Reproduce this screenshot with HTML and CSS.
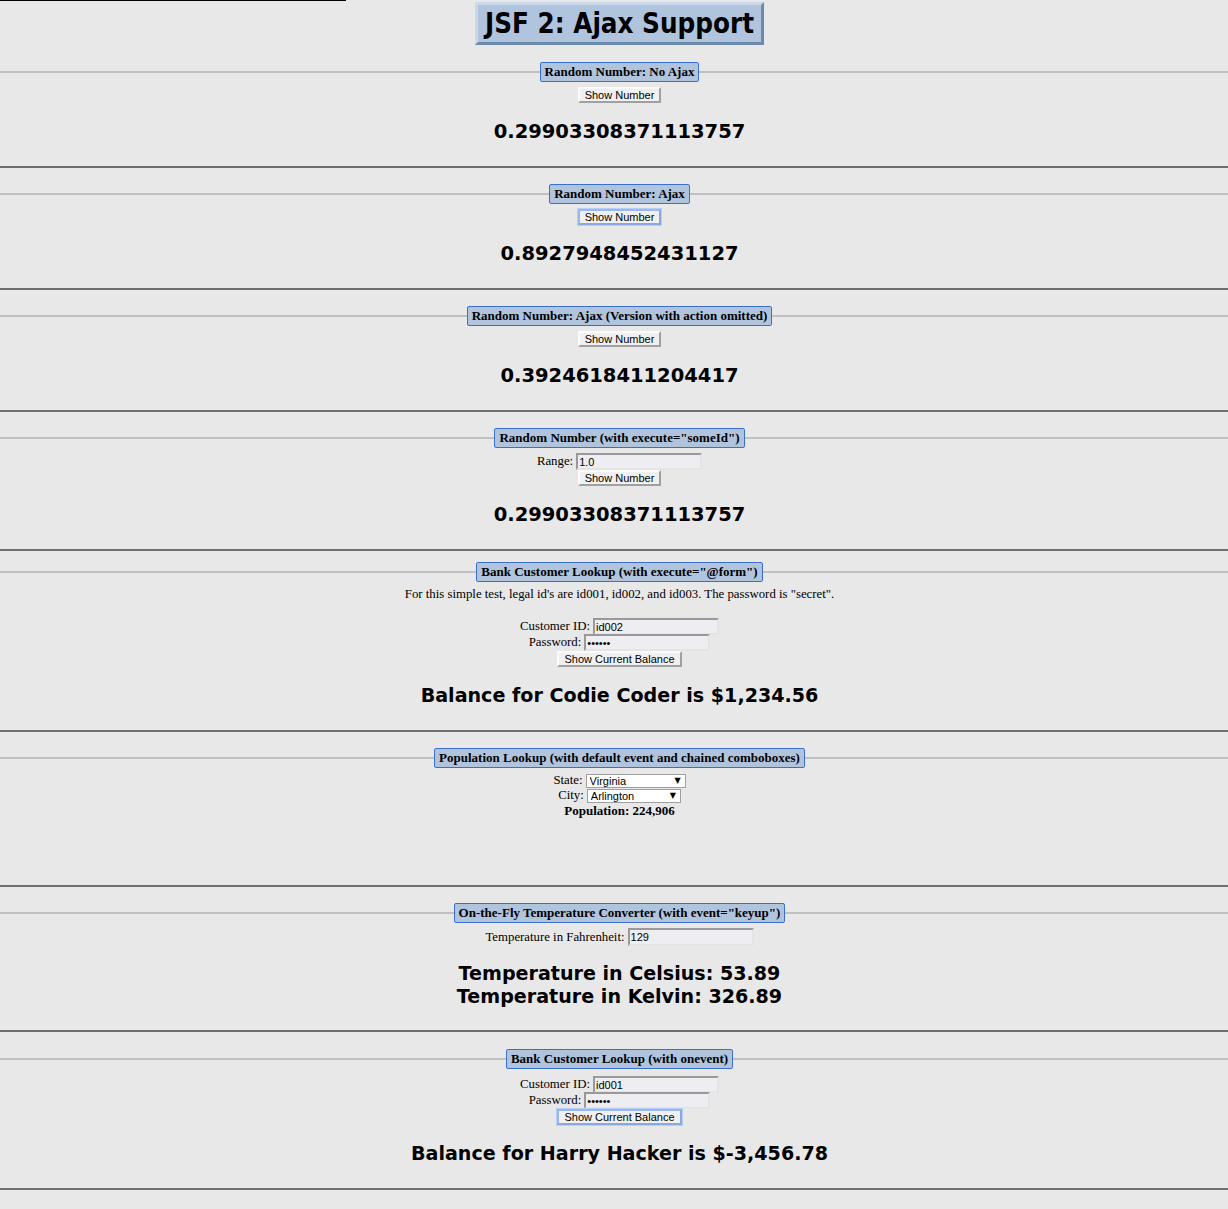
FILE: index.html
```html
<!DOCTYPE html>
<html lang="en">
<head>
<meta charset="utf-8">
<title>JSF 2: Ajax Support</title>
<link rel="stylesheet" href="styles.css">
</head>
<body>
<div class="topline"></div>
<main class="page">
  <div class="title-row"><h1 class="title">JSF 2: Ajax Support</h1></div>

  <section class="panel panel-first">
    <div class="legend-row"><span class="legend">Random Number: No Ajax</span></div>
    <div class="row row-btn"><button class="btn">Show Number</button></div>
    <p class="result">0.29903308371113757</p>
  </section>
  <hr class="sep">

  <section class="panel">
    <div class="legend-row"><span class="legend">Random Number: Ajax</span></div>
    <div class="row row-btn"><button class="btn btn-focus">Show Number</button></div>
    <p class="result">0.8927948452431127</p>
  </section>
  <hr class="sep">

  <section class="panel">
    <div class="legend-row"><span class="legend">Random Number: Ajax (Version with action omitted)</span></div>
    <div class="row row-btn"><button class="btn">Show Number</button></div>
    <p class="result">0.3924618411204417</p>
  </section>
  <hr class="sep">

  <section class="panel">
    <div class="legend-row"><span class="legend">Random Number (with execute="someId")</span></div>
    <div class="row row-field"><label class="lbl">Range:</label><input class="field" type="text" value="1.0"></div>
    <div class="row"><button class="btn">Show Number</button></div>
    <p class="result">0.29903308371113757</p>
  </section>
  <hr class="sep sep-tight">

  <section class="panel">
    <div class="legend-row"><span class="legend">Bank Customer Lookup (with execute="@form")</span></div>
    <p class="note">For this simple test, legal id's are id001, id002, and id003. The password is "secret".</p>
    <div class="row row-field"><label class="lbl">Customer ID:</label><input class="field" type="text" value="id002"></div>
    <div class="row row-field"><label class="lbl">Password:</label><input class="field" type="password" value="secret"></div>
    <div class="row"><button class="btn">Show Current Balance</button></div>
    <p class="result result-text">Balance for Codie Coder is $1,234.56</p>
  </section>
  <hr class="sep">

  <section class="panel">
    <div class="legend-row"><span class="legend">Population Lookup (with default event and chained comboboxes)</span></div>
    <div class="row row-select"><label class="lbl">State:</label><span class="select select-state"><select><option>Virginia</option></select></span></div>
    <div class="row row-select"><label class="lbl">City:</label><span class="select select-city"><select><option>Arlington</option></select></span></div>
    <p class="population">Population: 224,906</p>
  </section>
  <hr class="sep">

  <section class="panel">
    <div class="legend-row"><span class="legend">On-the-Fly Temperature Converter (with event="keyup")</span></div>
    <div class="row row-field row-temp"><label class="lbl">Temperature in Fahrenheit:</label><input class="field" type="text" value="129"></div>
    <div class="temps">
      <p class="result result-text result-line">Temperature in Celsius: 53.89</p>
      <p class="result result-text result-line">Temperature in Kelvin: 326.89</p>
    </div>
  </section>
  <hr class="sep sep-loose">

  <section class="panel panel-last">
    <div class="legend-row"><span class="legend">Bank Customer Lookup (with onevent)</span></div>
    <div class="row row-field"><label class="lbl">Customer ID:</label><input class="field" type="text" value="id001"></div>
    <div class="row row-field"><label class="lbl">Password:</label><input class="field" type="password" value="secret"></div>
    <div class="row"><button class="btn btn-focus">Show Current Balance</button></div>
    <p class="result result-text">Balance for Harry Hacker is $-3,456.78</p>
  </section>
  <hr class="sep">
</main>
</body>
</html>
```

FILE: styles.css
```css
html, body {
  margin: 0;
  padding: 0;
  background: #e8e8e8;
  color: #000;
  font-family: "Liberation Serif", "Times New Roman", serif;
  font-size: 12.8px;
}

.topline {
  width: 346px;
  height: 1px;
  background: #000;
}

.page {
  padding-left: 11px;
}

.title-row {
  display: flex;
  justify-content: center;
  margin-top: 1px;
}

.title {
  margin: 0;
  height: 43px;
  box-sizing: border-box;
  padding: 0 7px;
  background: #b0c4de;
  border: 3px solid;
  border-color: #c9d8ea #6c8bab #6c8bab #c9d8ea;
  font-family: "DejaVu Sans Condensed", "DejaVu Sans", sans-serif;
  font-weight: bold;
  font-size: 27.5px;
  line-height: 37px;
  color: #000;
}

.panel {
  margin: 0;
  text-align: center;
}

.panel-first {
  margin-top: 17px;
}

.legend-row {
  margin-left: -11px;
  padding-left: 11px;
  display: flex;
  justify-content: center;
  background: linear-gradient(#c0c0c0, #c0c0c0) 0 50% / 100% 2px no-repeat;
}

.legend {
  display: inline-block;
  height: 20px;
  box-sizing: border-box;
  padding: 0 4px;
  background: #b0c4de;
  border: 1px solid #3a6fd0;
  border-radius: 2px;
  font-weight: bold;
  font-size: 13px;
  line-height: 18px;
}

.row {
  display: flex;
  justify-content: center;
  align-items: center;
}

.row-btn {
  margin-top: 5px;
}

.row-field {
  height: 17px;
}

.row-field + .row-field {
  margin-top: -1px;
}

.legend-row + .row-field {
  margin-top: 5px;
}

.panel-last .legend-row + .row-field {
  margin-top: 7px;
}

.lbl {
  margin-right: 3px;
}

.field {
  width: 126px;
  height: 17px;
  box-sizing: border-box;
  margin: 0;
  padding: 0 1px;
  background: #eeeef2;
  border: 2px solid;
  border-color: #999 #e4e4e4 #e4e4e4 #999;
  font-family: "Liberation Sans", Arial, sans-serif;
  font-size: 11px;
  color: #000;
}

.btn {
  height: 16px;
  box-sizing: border-box;
  margin: 0;
  padding: 0 5px;
  background: #f0f0f0;
  border: 2px solid;
  border-color: #fafafa #a0a0a0 #a0a0a0 #fafafa;
  font-family: "Liberation Sans", Arial, sans-serif;
  font-size: 11px;
  line-height: 12px;
  color: #000;
}

.btn-focus {
  border-color: #9ab8f0 #8aa8e0 #8aa8e0 #9ab8f0;
  box-shadow: 0 0 0 1px #b8cef4;
}

.result {
  margin: 17px 0 0;
  font-family: "DejaVu Sans", Verdana, sans-serif;
  font-weight: bold;
  font-size: 19.5px;
  line-height: 24px;
}

.result-text {
  font-size: 19.1px;
}

.sep {
  margin: 22px 0 16px -11px;
  height: 2px;
  border: 0;
  background: #6e6e6e;
}

.sep-tight {
  margin-bottom: 11px;
}

.sep-loose {
  margin-bottom: 17px;
}

.note {
  margin: 4px 0 16px;
  line-height: 16px;
}

.row-select {
  height: 15px;
}

.legend-row + .row-select {
  margin-top: 5px;
}

.select {
  position: relative;
  display: inline-block;
}

.select select {
  appearance: none;
  -webkit-appearance: none;
  display: block;
  height: 14px;
  box-sizing: border-box;
  margin: 0;
  padding: 0 0 0 3px;
  background: #fff;
  border: 1px solid #a0a0a0;
  font-family: "Liberation Sans", Arial, sans-serif;
  font-size: 11px;
  line-height: 12px;
  color: #000;
}

.select::after {
  content: "\25BC";
  position: absolute;
  right: 5px;
  top: 2px;
  font-family: "DejaVu Sans", sans-serif;
  font-size: 8px;
  line-height: 10px;
  pointer-events: none;
}

.select-state select {
  width: 100px;
}

.select-city select {
  width: 94px;
}

.population {
  margin: 0 0 67px;
  font-weight: bold;
  font-size: 13px;
  line-height: 15px;
}

.row-temp {
  margin-top: 5px;
  height: 18px;
}

.row-temp .field {
  height: 18px;
}

.temps {
  margin-top: 16px;
}

.result-line {
  margin: 0;
  line-height: 23px;
}
```
